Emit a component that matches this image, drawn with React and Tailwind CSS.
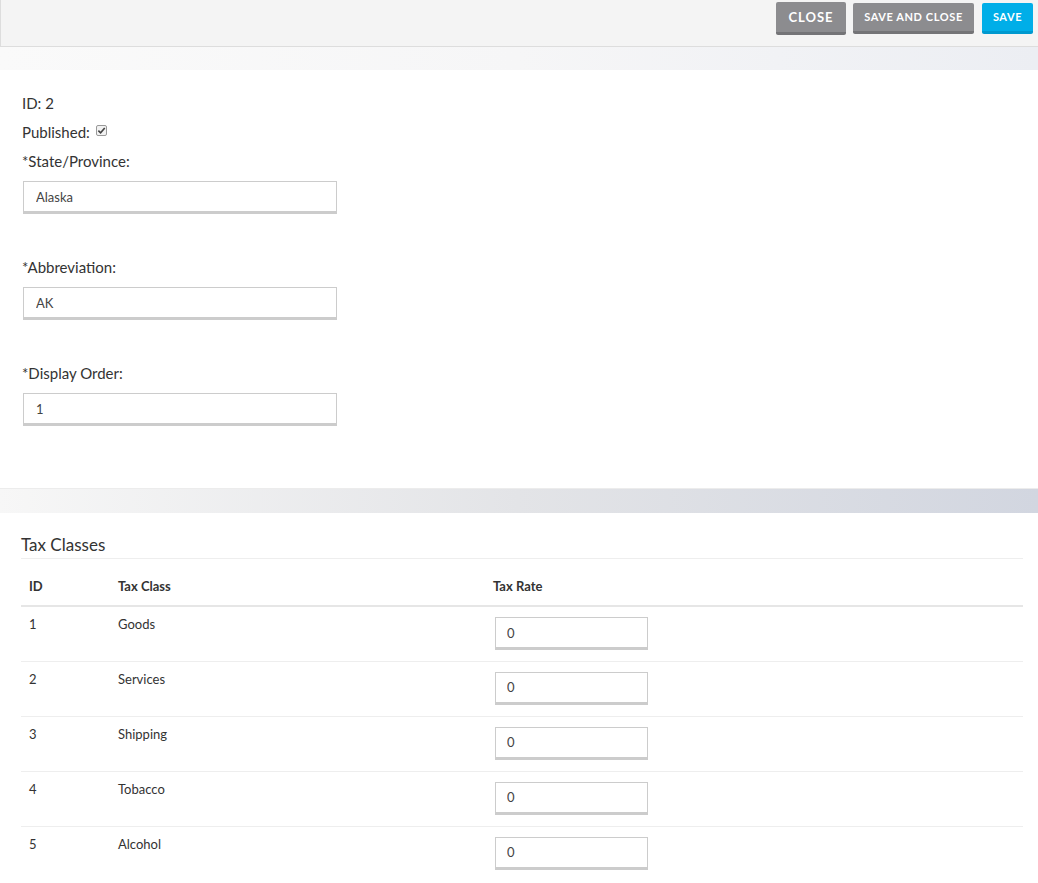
import React from 'react';

const taxRows = [
  { id: 1, name: 'Goods' },
  { id: 2, name: 'Services' },
  { id: 3, name: 'Shipping' },
  { id: 4, name: 'Tobacco' },
  { id: 5, name: 'Alcohol' },
];

const Field = ({ label, value, last }) => (
  <div className={last ? '' : 'mb-[43px]'}>
    <div className="text-[15px] leading-[20px] text-[#333]">{label}</div>
    <input
      type="text"
      defaultValue={value}
      className="mt-[10px] ml-[1px] block w-[314px] h-[33px] bg-white border border-[#ccc] border-b-[3px] px-[12px] text-[13px] text-[#444] outline-none"
    />
  </div>
);

const App = () => {
  return (
    <div className="min-h-screen bg-white font-['Lato','Liberation_Sans',sans-serif] text-[#333]">
      {/* toolbar */}
      <div className="h-[47px] bg-[#f4f4f4] border-l border-b border-[#ddd] flex justify-end items-start pt-[2px] pr-[5px] gap-[7px]">
        <button className="h-[33px] w-[70px] pt-[2px] bg-[#8c8c8f] border-b-[3px] border-[#747477] rounded-[2px] text-white text-[13px] font-bold tracking-[1px]">
          CLOSE
        </button>
        <button className="mt-[1px] h-[31px] w-[121px] bg-[#8c8c8f] border-b-[3px] border-[#747477] rounded-[2px] text-white text-[11px] font-bold tracking-[0.6px]">
          SAVE AND CLOSE
        </button>
        <button className="mt-[1px] ml-[1px] h-[31px] w-[51px] bg-[#00aee8] border-b-[3px] border-[#0099cf] rounded-[2px] text-white text-[11px] font-bold tracking-[0.6px]">
          SAVE
        </button>
      </div>
      <div className="h-[23px] bg-gradient-to-r from-[#fafafa] via-[#f6f6f7] to-[#eceef3]" />

      {/* form */}
      <div className="px-[22px] pt-[23px] pb-[62px]">
        <div className="text-[15px] leading-[20px] mb-[9px]">ID: 2</div>
        <div className="text-[15px] leading-[20px] mb-[9px] flex items-center gap-[6px]">
          Published:
          <span className="w-[11px] h-[11px] border border-[#999] bg-[#f2f2f2] rounded-[2px] flex items-center justify-center -mt-[3px]">
            <svg viewBox="0 0 10 10" className="w-[9px] h-[9px]">
              <path d="M1.5 5.2 L4 7.6 L8.6 2.2" fill="none" stroke="#444" strokeWidth="1.8" />
            </svg>
          </span>
        </div>
        <Field label="*State/Province:" value="Alaska" />
        <Field label="*Abbreviation:" value="AK" />
        <Field label="*Display Order:" value="1" last />
      </div>

      <div className="h-[25px] bg-gradient-to-r from-[#f7f7f7] via-[#e3e4e7] to-[#d2d6e0] border-t border-[#ececec]" />

      {/* tax classes */}
      <div className="pl-[21px] pr-[15px] pt-[20px]">
        <div className="text-[17px] leading-[24px] font-normal text-[#333] pb-[1px] border-b border-[#eee]">Tax Classes</div>
        <table className="w-full text-[13px] border-collapse">
          <thead>
            <tr className="border-b-2 border-[#e6e6e6]">
              <th className="w-[89px] pt-[17px] pb-[9px] leading-[20px] text-left pl-[8px] font-bold">ID</th>
              <th className="w-[375px] pt-[17px] pb-[9px] leading-[20px] text-left pl-[8px] font-bold">Tax Class</th>
              <th className="pt-[17px] pb-[9px] leading-[20px] text-left pl-[8px] font-bold">Tax Rate</th>
            </tr>
          </thead>
          <tbody>
            {taxRows.map((r) => (
              <tr key={r.id} className="border-b border-[#eee] last:border-b-0">
                <td className="align-top pl-[8px] pt-[7px] leading-[20px] h-[55px]">{r.id}</td>
                <td className="align-top pl-[8px] pt-[7px] leading-[20px]">{r.name}</td>
                <td className="align-top pl-[10px] pt-[10px]">
                  <input
                    type="text"
                    defaultValue="0"
                    className="block w-[153px] h-[33px] bg-white border border-[#ccc] border-b-[3px] px-[11px] text-[13px] text-[#444] outline-none"
                  />
                </td>
              </tr>
            ))}
          </tbody>
        </table>
      </div>
    </div>
  );
};

export default App;
